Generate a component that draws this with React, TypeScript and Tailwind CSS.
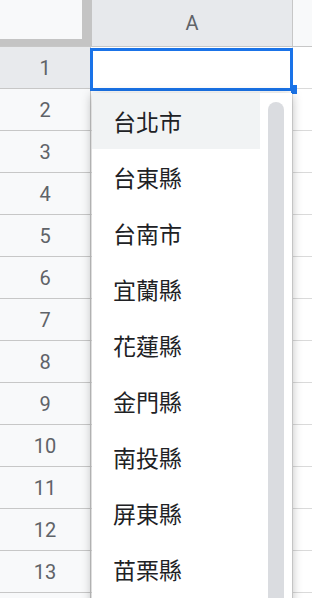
import React from "react";

const rows = Array.from({ length: 14 }, (_, i) => i + 1);
const options = ["台北市", "台東縣", "台南市", "宜蘭縣", "花蓮縣", "金門縣", "南投縣", "屏東縣", "苗栗縣"];

export default function App() {
  return (
    <div className="relative w-[312px] h-[598px] overflow-hidden bg-white font-['Roboto','Liberation_Sans',sans-serif]">
      {/* header row */}
      <div className="flex h-[47px] border-b border-[#c7c7c7]">
        <div className="w-[92px] h-full bg-[#c4c4c4] flex">
          <div className="w-[82px] h-[39px] bg-[#f8f9fa]" />
        </div>
        <div className="w-[201px] h-full bg-[#e7e9ec] border-r border-[#c7c7c7] flex items-center justify-center text-[20px] text-[#5f6368]">
          A
        </div>
        <div className="flex-1 h-full bg-[#f8f9fa]" />
      </div>

      {/* grid body */}
      {rows.map((n) => (
        <div key={n} className="flex h-[42px]">
          <div
            className={`w-[91px] h-full border-r border-b border-[#c7c7c7] flex items-center justify-center text-[20px] text-[#5f6368] ${
              n === 1 ? "bg-[#e8eaed]" : "bg-[#f8f9fa]"
            }`}
          >
            {n < 14 ? n : ""}
          </div>
          <div className="w-[202px] h-full border-r border-b border-[#e2e2e2] bg-white" />
          <div className="flex-1 h-full border-b border-[#dadada] bg-white" />
        </div>
      ))}

      {/* selected cell */}
      <div className="absolute left-[90px] top-[48px] w-[203px] h-[43px] border-[3px] border-[#1a73e8]" />
      <div className="absolute left-[291px] top-[85px] w-[6px] h-[9px] bg-[#1a73e8]" />

      {/* dropdown */}
      <div className="absolute left-[92px] top-[93px] w-[200px] h-[540px] bg-white shadow-[0_2px_10px_rgba(0,0,0,0.28)] font-['Noto_Sans_CJK_TC',sans-serif]">
        <div className="flex flex-col w-[168px]">
          {options.map((o, i) => (
            <div
              key={o}
              className={`h-[56px] flex items-center pl-[21px] text-[23px] text-[#202124] ${
                i === 0 ? "bg-[#f1f3f4]" : ""
              }`}
            >
              {o}
            </div>
          ))}
        </div>
        <div className="absolute left-[176px] top-[9px] w-[16px] h-[560px] rounded-full bg-[#dadce0]" />
      </div>
    </div>
  );
}
